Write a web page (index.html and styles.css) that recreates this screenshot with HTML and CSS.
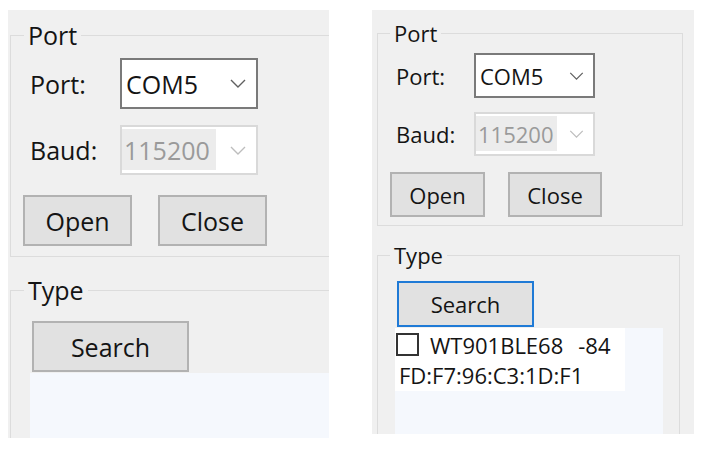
FILE: index.html
```html
<!DOCTYPE html>
<html>
<head>
<meta charset="utf-8">
<link rel="stylesheet" href="styles.css">
</head>
<body>
<div class="page">
  <div class="panel big">
    <fieldset class="group port">
      <legend>Port</legend>
      <div class="body">
        <div class="row">
          <span class="lbl">Port:</span>
          <div class="combo">
            <span class="val">COM5</span>
            <svg class="chev" viewBox="0 0 16 9"><polyline points="1,1 8,8 15,1"/></svg>
          </div>
        </div>
        <div class="row row2">
          <span class="lbl">Baud:</span>
          <div class="combo disabled">
            <span class="val">115200</span>
            <svg class="chev" viewBox="0 0 16 9"><polyline points="1,1 8,8 15,1"/></svg>
          </div>
        </div>
        <div class="btns">
          <button class="btn open">Open</button>
          <button class="btn close">Close</button>
        </div>
      </div>
    </fieldset>
    <fieldset class="group type">
      <legend>Type</legend>
      <button class="btn search">Search</button>
      <div class="list"></div>
    </fieldset>
  </div>

  <div class="panel small">
    <fieldset class="group port">
      <legend>Port</legend>
      <div class="body">
        <div class="row">
          <span class="lbl">Port:</span>
          <div class="combo">
            <span class="val">COM5</span>
            <svg class="chev" viewBox="0 0 16 9"><polyline points="1,1 8,8 15,1"/></svg>
          </div>
        </div>
        <div class="row row2">
          <span class="lbl">Baud:</span>
          <div class="combo disabled">
            <span class="val">115200</span>
            <svg class="chev" viewBox="0 0 16 9"><polyline points="1,1 8,8 15,1"/></svg>
          </div>
        </div>
        <div class="btns">
          <button class="btn open">Open</button>
          <button class="btn close">Close</button>
        </div>
      </div>
    </fieldset>
    <fieldset class="group type">
      <legend>Type</legend>
      <button class="btn search focused">Search</button>
      <div class="list">
        <div class="item">
          <div class="item-top">
            <span class="check"></span>
            <span class="name">WT901BLE68</span>
            <span class="rssi">-84</span>
          </div>
          <div class="mac">FD:F7:96:C3:1D:F1</div>
        </div>
      </div>
    </fieldset>
  </div>
</div>
</body>
</html>
```
FILE: styles.css
```css
* { box-sizing: border-box; }
html, body { margin: 0; padding: 0; background: #ffffff; }
body {
  font-family: "Open Sans", "Noto Sans", sans-serif;
  font-weight: 500;
  color: #141414;
}
.page {
  display: flex;
  align-items: flex-start;
  padding: 10px 0 0 8px;
  gap: 43px;
}
.panel {
  background: #f0f0f0;
  overflow: hidden;
  display: flex;
  flex-direction: column;
  align-items: flex-start;
}
.group {
  border: 1px solid #dcdcdc;
  padding: 0;
  margin: 0;
  min-width: 0;
}
.group legend {
  padding: 0 4px;
}
.body { display: flex; flex-direction: column; align-items: flex-start; }
.row { display: flex; align-items: center; }
.lbl { display: block; }
.combo {
  display: flex;
  align-items: center;
  background: #ffffff;
  border: 2px solid #7a7a7a;
}
.combo .val { display: block; }
.combo .chev {
  margin-left: auto;
  fill: none;
  stroke: #606060;
  stroke-width: 1.4;
}
.combo.disabled { border-color: #d9d9d9; }
.combo.disabled .val {
  color: #9a9a9a;
  background: #ececec;
  align-self: stretch;
  display: flex;
  align-items: center;
}
.combo.disabled .chev { stroke: #bdbdbd; }
.btns { display: flex; }
.btn {
  font-family: inherit;
  font-weight: 500;
  color: #141414;
  background: #e1e1e1;
  border: 2px solid #b2b2b2;
  padding: 0;
  margin: 0;
}
.btn.focused { border-color: #1f7ad6; }
.list { background: #f5f8fd; }
.item { background: #ffffff; }
.item-top { display: flex; align-items: center; }
.check {
  display: block;
  background: #ffffff;
  border: 2px solid #333333;
}

/* ---------- big (left) panel ---------- */
.big { width: 321px; height: 428px; }
.big .group legend { font-size: 25px; line-height: 30px; margin-left: 13px; }
.big .port { margin: 10px 0 0 2px; width: 360px; }
.big .port .body { padding: 8px 0 10px 19px; }
.big .row { height: 51px; }
.big .row2 { margin-top: 16px; height: 50px; }
.big .lbl { width: 90px; font-size: 25px; }
.big .combo { width: 138px; height: 100%; font-size: 25px; padding-right: 10px; }
.big .combo .val { padding-left: 4px; }
.big .combo.disabled .val { margin: 2px 0 3px; width: 94px; padding-left: 2px; }
.big .chev { width: 16px; height: 9px; }
.big .btns { margin: 20px 0 0 -7px; gap: 26px; }
.big .btn { font-size: 25px; width: 109px; height: 51px; }
.big .type { margin: 18px 0 0 2px; width: 360px; height: 200px; }
.big .search { margin: 16px 0 0 21px; width: 157px; height: 51px; display: block; }
.big .list { margin: 1px 0 0 19px; height: 120px; }

/* ---------- small (right) panel ---------- */
.small { width: 322px; height: 424px; }
.small .group legend { font-size: 22px; line-height: 26px; margin-left: 12px; }
.small .port { margin: 10px 0 0 5px; width: 306px; }
.small .port .body { padding: 7px 0 8px 18px; }
.small .row { height: 45px; }
.small .row2 { margin-top: 14px; height: 44px; }
.small .lbl { width: 78px; font-size: 22px; }
.small .combo { width: 121px; height: 100%; font-size: 22px; padding-right: 9px; }
.small .combo .val { padding-left: 4px; }
.small .combo.disabled .val { margin: 2px 0 3px; width: 81px; padding-left: 2px; }
.small .chev { width: 15px; height: 8px; }
.small .btns { margin: 16px 0 0 -6px; gap: 23px; }
.small .btn { font-size: 22px; height: 45px; }
.small .btn.open { width: 95px; }
.small .btn.close { width: 94px; }
.small .type { margin: 16px 0 0 5px; width: 303px; height: 220px; }
.small .search { margin: 13px 0 0 19px; width: 137px; height: 46px; display: block; }
.small .list { margin: 1px 0 0 17px; width: 268px; height: 120px; }
.small .item { width: 230px; height: 63px; padding: 5px 0 0 1px; font-size: 22px; }
.small .check { width: 23px; height: 23px; }
.small .item-top { height: 23px; line-height: 26px; }
.small .name { margin-left: 11px; }
.small .rssi { margin-left: 15px; }
.small .mac { margin: 6px 0 0 3px; line-height: 26px; }
```
